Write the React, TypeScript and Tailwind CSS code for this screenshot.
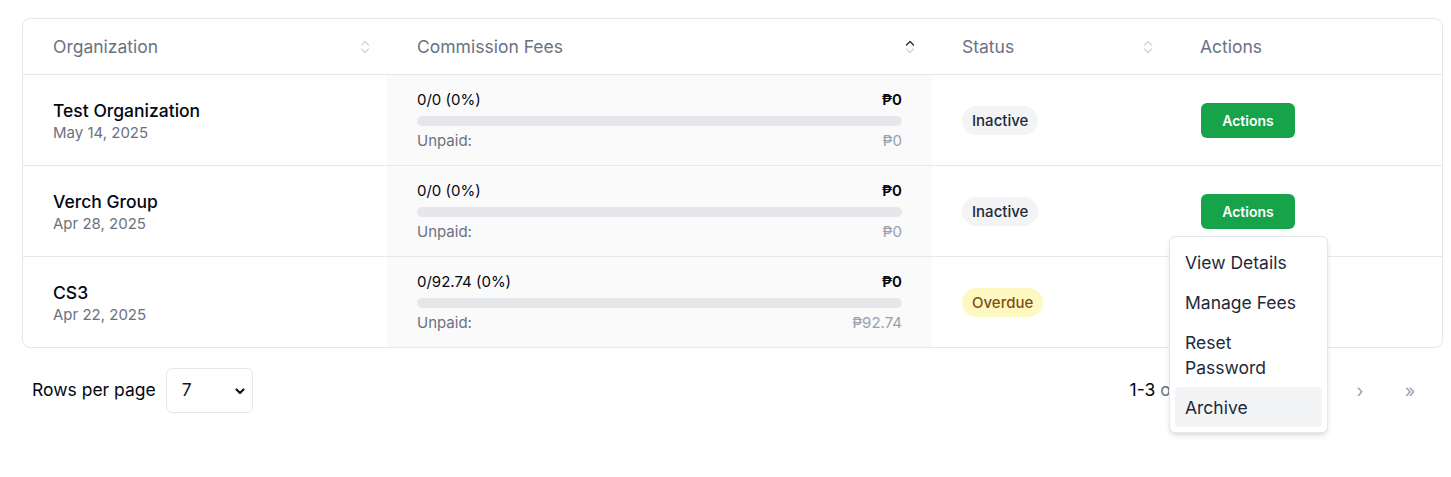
import React from "react";

const rows = [
  { name: "Test Organization", date: "May 14, 2025", ratio: "0/0 (0%)", paid: "₱0", unpaid: "₱0", status: "Inactive" },
  { name: "Verch Group", date: "Apr 28, 2025", ratio: "0/0 (0%)", paid: "₱0", unpaid: "₱0", status: "Inactive" },
  { name: "CS3", date: "Apr 22, 2025", ratio: "0/92.74 (0%)", paid: "₱0", unpaid: "₱92.74", status: "Overdue" },
];

function SortIcon({ active }: { active?: boolean }) {
  return (
    <svg width="10" height="14" viewBox="0 0 10 14" fill="none" strokeWidth="1.3" strokeLinecap="round" strokeLinejoin="round" className="mr-[1px]">
      <path d="M1.5 5 5 1.5 8.5 5" stroke={active ? "#1f2937" : "#d1d5db"} />
      <path d="M1.5 9 5 12.5 8.5 9" stroke="#d1d5db" />
    </svg>
  );
}

function HeaderCell({ label, sort, active }: { label: string; sort?: boolean; active?: boolean }) {
  return (
    <th className="h-[55px] pt-[2px] pl-[30px] pr-4 text-left font-normal text-[17.5px] text-gray-500">
      <div className="flex items-center justify-between">
        <span>{label}</span>
        {sort && <SortIcon active={active} />}
      </div>
    </th>
  );
}

function Menu() {
  const items = ["View Details", "Manage Fees"];
  return (
    <div className="absolute left-[-32px] top-full mt-[7px] z-10 w-[159px] rounded-md border border-gray-200 bg-white p-[5px] shadow-md text-[17.5px] leading-[25px] text-gray-800">
      {items.map((i) => (
        <div key={i} className="px-[10px] py-[7.5px] rounded">{i}</div>
      ))}
      <div className="px-[10px] py-[7.5px] rounded">
        <span className="block">Reset</span>
        <span className="block">Password</span>
      </div>
      <div className="px-[10px] py-[7.5px] rounded bg-gray-100">Archive</div>
    </div>
  );
}

export default function App() {
  return (
    <div className="min-h-[477px] bg-white pt-[18px] pl-[22px] pr-[8px] font-['Inter',sans-serif] text-gray-900">
      <div className="rounded-lg border border-gray-200">
        <table className="w-full table-fixed border-collapse">
          <colgroup>
            <col className="w-[364px]" />
            <col className="w-[545px]" />
            <col className="w-[238px]" />
            <col />
          </colgroup>
          <thead>
            <tr className="border-b border-gray-200">
              <HeaderCell label="Organization" sort />
              <HeaderCell label="Commission Fees" sort active />
              <HeaderCell label="Status" sort />
              <HeaderCell label="Actions" />
            </tr>
          </thead>
          <tbody>
            {rows.map((r, idx) => (
              <tr key={r.name} className={idx < rows.length - 1 ? "border-b border-gray-200" : ""}>
                <td className="h-[91px] pt-[2px] pl-[30px] align-middle">
                  <div className="text-[17.5px] leading-6 font-medium text-gray-950">{r.name}</div>
                  <div className="text-[15px] leading-5 text-gray-500">{r.date}</div>
                </td>
                <td className="bg-[#fafafa] pt-[2px] px-[30px] align-middle">
                  <div className="flex justify-between text-[15px] leading-5">
                    <span className="text-gray-950">{r.ratio}</span>
                    <span className="font-semibold text-gray-950">{r.paid}</span>
                  </div>
                  <div className="mt-[6px] h-[10px] rounded-full bg-[#e5e7eb]" />
                  <div className="mt-[5px] flex justify-between text-[15px] leading-5">
                    <span className="text-gray-500">Unpaid:</span>
                    <span className="text-gray-400">{r.unpaid}</span>
                  </div>
                </td>
                <td className="pt-[2px] pl-[30px] align-middle">
                  <span
                    className={
                      r.status === "Overdue"
                        ? "inline-block rounded-full bg-[#fef9c3] px-[10px] py-1 text-[15px] leading-[21px] font-medium text-[#854d0e]"
                        : "inline-block rounded-full bg-[#f3f4f6] px-[10px] py-1 text-[15px] leading-[21px] font-medium text-gray-800"
                    }
                  >
                    {r.status}
                  </span>
                </td>
                <td className="pt-[2px] pl-[31px] align-middle">
                  {idx < 2 && (
                    <div className="relative inline-block">
                      <button className="h-[35px] w-[94px] rounded-md bg-[#16a34a] text-[14px] font-semibold text-white">
                        Actions
                      </button>
                      {idx === 1 && <Menu />}
                    </div>
                  )}
                </td>
              </tr>
            ))}
          </tbody>
        </table>
      </div>

      <div className="mt-5 flex items-center justify-between pl-[10px] pr-[13px]">
        <div className="flex items-center gap-[10px] text-[17.5px]">
          <span className="text-gray-950">Rows per page</span>
          <div className="flex h-[45px] w-[87px] items-center justify-between rounded-md border border-gray-200 pl-[15px] pr-[6px]">
            <span>7</span>
            <svg width="12" height="12" viewBox="0 0 12 12" fill="none" stroke="#111827" strokeWidth="2.2" strokeLinecap="round" strokeLinejoin="round">
              <path d="M2.5 4.5 6 8l3.5-3.5" />
            </svg>
          </div>
        </div>
        <div className="flex items-center text-[17.5px]">
          <span className="mr-[37px]">
            <span className="text-gray-950">1-3</span> <span className="text-gray-500">of 3</span>
          </span>
          {["«", "‹", "›", "»"].map((c) => (
            <span key={c} className="flex h-10 w-10 items-center justify-center ml-[10px] text-[18px] text-gray-400">
              {c}
            </span>
          ))}
        </div>
      </div>
    </div>
  );
}
